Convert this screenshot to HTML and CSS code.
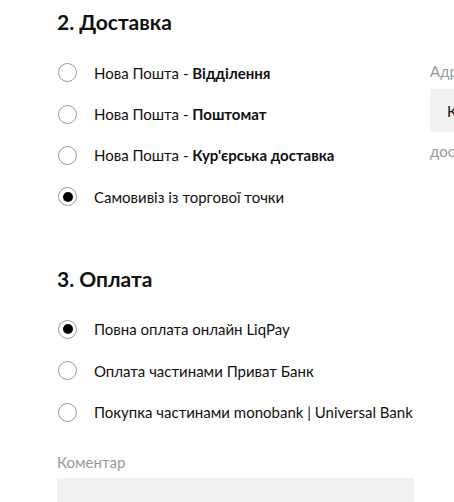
FILE: index.html
```html
<!DOCTYPE html>
<html lang="uk">
<head>
<meta charset="utf-8">
<link rel="stylesheet" href="styles.css">
</head>
<body>
<div class="page">
  <div class="main">
    <section class="section">
      <h2 class="title">2. Доставка</h2>
      <div class="options">
        <label class="option"><span class="radio"></span><span>Нова Пошта - <b>Відділення</b></span></label>
        <label class="option"><span class="radio"></span><span>Нова Пошта - <b>Поштомат</b></span></label>
        <label class="option"><span class="radio"></span><span>Нова Пошта - <b>Кур'єрська доставка</b></span></label>
        <label class="option"><span class="radio checked"></span><span>Самовивіз із торгової точки</span></label>
      </div>
    </section>
    <section class="section pay">
      <h2 class="title">3. Оплата</h2>
      <div class="options">
        <label class="option"><span class="radio checked"></span><span>Повна оплата онлайн LiqPay</span></label>
        <label class="option"><span class="radio"></span><span>Оплата частинами Приват Банк</span></label>
        <label class="option"><span class="radio"></span><span>Покупка частинами monobank | Universal Bank</span></label>
      </div>
      <div class="comment">
        <div class="label">Коментар</div>
        <div class="textarea"></div>
      </div>
    </section>
  </div>
  <aside class="side">
    <div class="label">Адреса</div>
    <div class="field">Київ</div>
    <div class="hint">доставка</div>
  </aside>
</div>
</body>
</html>
```
FILE: styles.css
```css
html, body {
  margin: 0;
  padding: 0;
  background: #fff;
  overflow: hidden;
}
body {
  font-family: Lato, "Open Sans", sans-serif;
  color: #111;
  font-size: 15px;
}
.page {
  display: flex;
  gap: 16px;
  padding-left: 57px;
  width: 600px;
}
.main {
  width: 357px;
  flex: none;
}
.title {
  margin: 0;
  font-size: 21px;
  font-weight: 700;
  line-height: 26px;
  padding-top: 9px;
  color: #111;
}
.options {
  display: flex;
  flex-direction: column;
  margin-top: 17px;
}
.option {
  display: flex;
  align-items: center;
  gap: 17px;
  height: 41.4px;
  line-height: 18px;
  white-space: nowrap;
}
.option b {
  font-weight: 700;
}
.radio {
  width: 17px;
  height: 17px;
  border: 1.5px solid #9a9a9a;
  border-radius: 50%;
  flex: none;
  display: flex;
  align-items: center;
  justify-content: center;
  margin-left: 1px;
}
.radio.checked::after {
  content: "";
  width: 10px;
  height: 10px;
  border-radius: 50%;
  background: #000;
}
.pay {
  margin-top: 39px;
}
.comment {
  margin-top: 20px;
}
.label {
  color: #999;
  font-size: 15px;
  line-height: 18px;
}
.textarea {
  margin-top: 7px;
  height: 60px;
  background: #f2f2f2;
}
.side {
  width: 200px;
  padding-top: 62px;
}
.field {
  margin-top: 9px;
  height: 43px;
  background: #f2f2f2;
  display: flex;
  align-items: center;
  padding-left: 17px;
  font-size: 15px;
}
.hint {
  color: #999;
  margin-top: 10px;
  line-height: 18px;
}
```
